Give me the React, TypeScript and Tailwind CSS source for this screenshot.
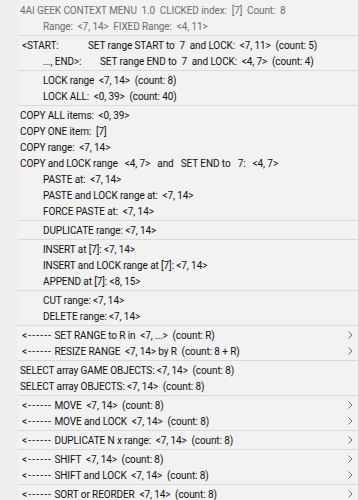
type Entry =
  | { kind: "sep" }
  | { kind: "item"; text: string; indent?: boolean; sub?: boolean };

const entries: Entry[] = [
  { kind: "sep" },
  { kind: "item", text: "<START:" },
  { kind: "item", text: "..., END>:", indent: true },
  { kind: "sep" },
  { kind: "item", text: "LOCK range  <7, 14>  (count: 8)", indent: true },
  { kind: "item", text: "LOCK ALL:  <0, 39>  (count: 40)", indent: true },
  { kind: "sep" },
  { kind: "item", text: "COPY ALL items:  <0, 39>" },
  { kind: "item", text: "COPY ONE item:  [7]" },
  { kind: "item", text: "COPY range:  <7, 14>" },
  { kind: "item", text: "COPY and LOCK range   <4, 7>   and   SET END to   7:   <4, 7>" },
  { kind: "item", text: "PASTE at:  <7, 14>", indent: true },
  { kind: "item", text: "PASTE and LOCK range at:  <7, 14>", indent: true },
  { kind: "item", text: "FORCE PASTE at:  <7, 14>", indent: true },
  { kind: "sep" },
  { kind: "item", text: "DUPLICATE range: <7, 14>", indent: true },
  { kind: "sep" },
  { kind: "item", text: "INSERT at [7]: <7, 14>", indent: true },
  { kind: "item", text: "INSERT and LOCK range at [7]: <7, 14>", indent: true },
  { kind: "item", text: "APPEND at [7]: <8, 15>", indent: true },
  { kind: "sep" },
  { kind: "item", text: "CUT range: <7, 14>", indent: true },
  { kind: "item", text: "DELETE range: <7, 14>", indent: true },
  { kind: "sep" },
  { kind: "item", text: "SET RANGE to R in  <7, ...>  (count: R)", sub: true },
  { kind: "item", text: "RESIZE RANGE  <7, 14> by R  (count: 8 + R)", sub: true },
  { kind: "sep" },
  { kind: "item", text: "SELECT array GAME OBJECTS: <7, 14>  (count: 8)" },
  { kind: "item", text: "SELECT array OBJECTS: <7, 14>  (count: 8)" },
  { kind: "sep" },
  { kind: "item", text: "MOVE  <7, 14>  (count: 8)", sub: true },
  { kind: "item", text: "MOVE and LOCK  <7, 14>  (count: 8)", sub: true },
  { kind: "sep" },
  { kind: "item", text: "DUPLICATE N x range:  <7, 14>  (count: 8)", sub: true },
  { kind: "sep" },
  { kind: "item", text: "SHIFT  <7, 14>  (count: 8)", sub: true },
  { kind: "item", text: "SHIFT and LOCK  <7, 14>  (count: 8)", sub: true },
  { kind: "sep" },
  { kind: "item", text: "SORT or REORDER  <7, 14>  (count: 8)", sub: true },
];

function Chevron() {
  return (
    <svg width="5" height="8" viewBox="0 0 5 8" className="absolute right-[6px] top-[4px]">
      <path d="M0.5 0.5 L4 4 L0.5 7.5" fill="none" stroke="#707070" strokeWidth="1" />
    </svg>
  );
}

export default function App() {
  return (
    <div
      className="relative h-[500px] w-[359px] overflow-hidden bg-[#f2f2f2] text-[10px] tracking-[-0.1px] text-[#111111]"
      style={{ fontFamily: "'Segoe UI', Roboto, 'Noto Sans', sans-serif" }}
    >
      <div className="absolute inset-y-0 left-0 w-[18px] bg-[#efefef]" />
      <div className="absolute inset-y-0 right-0 w-px bg-[#cfcfcf]" />
      <div className="relative pt-[2px]">
        <div className="flex h-4 items-center whitespace-pre pl-[20px] text-[#6e6e6e]">
          4AI GEEK CONTEXT MENU  1.0  CLICKED index:  [7]  Count:  8
        </div>
        <div className="flex h-4 items-center whitespace-pre pl-[43px] text-[#6e6e6e]">
          Range:  &lt;7, 14&gt;  FIXED Range:  &lt;4, 11&gt;
        </div>
        {entries.map((e, i) => {
          if (e.kind === "sep") {
            return <div key={i} className="ml-[18px] mr-px my-px h-px bg-[#dadada]" />;
          }
          if (e.text === "<START:") {
            return (
              <div key={i} className="flex h-4 items-center whitespace-pre pl-[22px]">
                <span className="w-[66px] shrink-0">&lt;START:</span>
                <span>SET range START to  7  and LOCK:  &lt;7, 11&gt;  (count: 5)</span>
              </div>
            );
          }
          if (e.text === "..., END>:") {
            return (
              <div key={i} className="flex h-4 items-center whitespace-pre pl-[43px]">
                <span className="w-[57px] shrink-0">..., END&gt;:</span>
                <span>SET range END to  7  and LOCK:  &lt;4, 7&gt;  (count: 4)</span>
              </div>
            );
          }
          if (e.sub) {
            return (
              <div key={i} className="relative flex h-4 items-center whitespace-pre pl-[22px]">
                <span className="tracking-[1.2px]">&lt;------</span>
                <span> {e.text}</span>
                <Chevron />
              </div>
            );
          }
          return (
            <div
              key={i}
              className={`relative flex h-4 items-center whitespace-pre ${
                e.indent ? "pl-[43px]" : "pl-[20px]"
              }`}
            >
              {e.text}
            </div>
          );
        })}
      </div>
    </div>
  );
}
